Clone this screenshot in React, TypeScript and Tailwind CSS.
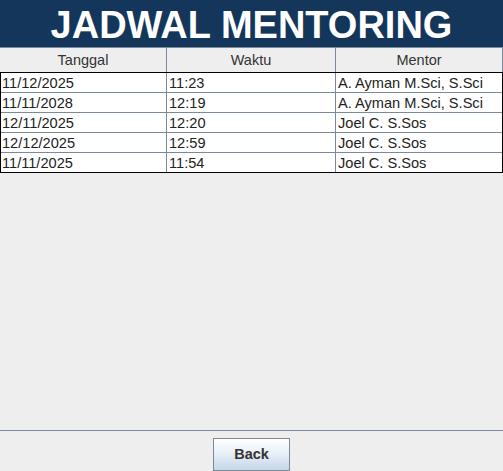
import React from "react";

const rows = [
  ["11/12/2025", "11:23", "A. Ayman M.Sci, S.Sci"],
  ["11/11/2028", "12:19", "A. Ayman M.Sci, S.Sci"],
  ["12/11/2025", "12:20", "Joel C. S.Sos"],
  ["12/12/2025", "12:59", "Joel C. S.Sos"],
  ["11/11/2025", "11:54", "Joel C. S.Sos"],
];

export default function App() {
  return (
    <div
      className="w-[503px] h-[471px] flex flex-col bg-[#eeeeee] overflow-hidden"
      style={{ fontFamily: '"Liberation Sans", Arial, sans-serif' }}
    >
      <div className="h-[47px] bg-[#14365a] flex items-center justify-center">
        <span className="text-white font-bold text-[38px] leading-none pt-[2px]">
          JADWAL MENTORING
        </span>
      </div>
      <div className="h-[25px] border-t border-[#7a8a99] flex text-[14.5px] text-[#333333] bg-[#eeeeee]">
        <div className="w-[167px] border-r border-[#7a8a99] flex items-center justify-center pt-[2px]">Tanggal</div>
        <div className="w-[169px] border-r border-[#7a8a99] flex items-center justify-center pt-[2px]">Waktu</div>
        <div className="w-[167px] border-r border-[#7a8a99] flex items-center justify-center pt-[2px]">Mentor</div>
      </div>
      <div className="border border-black bg-white text-[14.6px] text-[#222222]">
        {rows.map((r, i) => (
          <div
            key={i}
            className={
              i < rows.length - 1
                ? "flex h-[20px] border-b border-[#7a8a99]"
                : "flex h-[19px]"
            }
          >
            <div className="w-[166px] border-r border-[#7a8a99] pl-[1px] leading-[19px] pt-[1px]">{r[0]}</div>
            <div className="w-[169px] border-r border-[#7a8a99] pl-[2px] leading-[19px] pt-[1px]">{r[1]}</div>
            <div className="w-[166px] pl-[2px] leading-[19px] pt-[1px]">{r[2]}</div>
          </div>
        ))}
      </div>
      <div className="flex-1" />
      <div className="h-[41px] border-t border-[#7a8a99] flex justify-center pt-[7px]">
        <button className="w-[77px] h-[33px] border border-[#7a8a99] bg-gradient-to-b from-white via-[#e6eef7] to-[#c4d6e9] text-[14.5px] font-bold text-[#333333] flex items-center justify-center pt-[1px]">
          Back
        </button>
      </div>
    </div>
  );
}
